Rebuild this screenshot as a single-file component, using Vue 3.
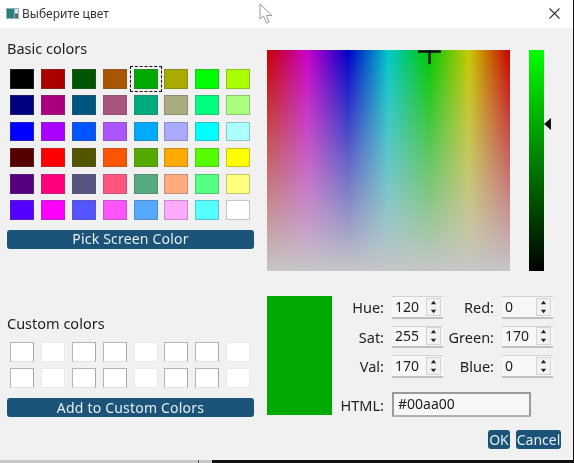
<script setup>
const rows = [
  ['#000000','#aa0000','#005500','#aa5500','#00aa00','#aaaa00','#00ff00','#aaff00'],
  ['#00007f','#aa007f','#00557f','#aa557f','#00aa7f','#aaaa7f','#00ff7f','#aaff7f'],
  ['#0000ff','#aa00ff','#0055ff','#aa55ff','#00aaff','#aaaaff','#00ffff','#aaffff'],
  ['#550000','#ff0000','#555500','#ff5500','#55aa00','#ffaa00','#55ff00','#ffff00'],
  ['#55007f','#ff007f','#55557f','#ff557f','#55aa7f','#ffaa7f','#55ff7f','#ffff7f'],
  ['#5500ff','#ff00ff','#5555ff','#ff55ff','#55aaff','#ffaaff','#55ffff','#ffffff'],
]
const basic = rows.flat()
const strong = [true, false, true, true, false, true, true, false]
const custom = [...strong, ...strong]
const spins = [
  { label: 'Hue:', value: '120' },
  { label: 'Red:', value: '0' },
  { label: 'Sat:', value: '255' },
  { label: 'Green:', value: '170' },
  { label: 'Val:', value: '170' },
  { label: 'Blue:', value: '0' },
]
</script>

<template>
  <div class="window">
    <header class="titlebar">
      <svg class="app-icon" width="13" height="13" viewBox="0 0 13 13">
        <rect x="0" y="1" width="13" height="11" fill="#8fb3b8" />
        <rect x="1" y="2" width="7" height="9" fill="#2c7f78" />
        <rect x="9" y="2" width="3" height="4" fill="#d8e4e6" />
        <rect x="9" y="7" width="3" height="4" fill="#4a6a78" />
      </svg>
      <span class="title">Выберите цвет</span>
      <svg class="close" width="11" height="11" viewBox="0 0 11 11">
        <path d="M0.5 0.5 L10.5 10.5 M10.5 0.5 L0.5 10.5" stroke="#333" stroke-width="1.1" fill="none" />
      </svg>
      <svg class="pointer" width="16" height="22" viewBox="0 0 16 22">
        <path d="M1 1 L1 16 L4.5 13 L7.5 20 L10 19 L7.5 12.5 L13 12.5 Z" fill="#fff" stroke="#9a9a9a" stroke-width="1" />
      </svg>
    </header>

    <main class="content">
      <section class="left">
        <h2 class="heading">Basic colors</h2>
        <div class="swatches">
          <div v-for="(c, i) in basic" :key="i" class="swatch-cell" :class="{ selected: c === '#00aa00' }">
            <div class="swatch" :style="{ background: c }"></div>
          </div>
        </div>
        <button class="btn wide pick">Pick Screen Color</button>
        <div class="spacer"></div>
        <h2 class="heading">Custom colors</h2>
        <div class="customs">
          <div v-for="(s, i) in custom" :key="i" class="custom" :class="{ strong: s }"></div>
        </div>
        <button class="btn wide add">Add to Custom Colors</button>
      </section>

      <section class="right">
        <div class="picker-row">
          <div class="spectrum">
            <svg class="cross" width="23" height="14" viewBox="0 0 23 14">
              <path d="M0 1.5 H23 M11.5 0 V14" stroke="#111" stroke-width="2.4" fill="none" />
            </svg>
          </div>
          <div class="value-wrap">
            <div class="value-bar"></div>
            <svg class="arrow" width="7" height="12" viewBox="0 0 7 12"><path d="M7 0 V12 L0 6 Z" fill="#111" /></svg>
          </div>
        </div>

        <div class="controls">
          <div class="preview"></div>
          <div class="fields">
            <div class="spin-grid">
              <div v-for="s in spins" :key="s.label" class="field">
                <label class="lbl">{{ s.label }}</label>
                <div class="spin">
                  <span class="val">{{ s.value }}</span>
                  <div class="steppers">
                    <svg width="9" height="9" viewBox="0 0 9 9"><path d="M4.5 2 L7.5 6 H1.5 Z" fill="#222" /></svg>
                    <svg width="9" height="9" viewBox="0 0 9 9"><path d="M4.5 7 L7.5 3 H1.5 Z" fill="#222" /></svg>
                  </div>
                </div>
              </div>
            </div>
            <div class="html-row">
              <label class="lbl html-lbl">HTML:</label>
              <div class="html-input">#00aa00</div>
            </div>
          </div>
        </div>

        <div class="actions">
          <button class="btn ok">OK</button>
          <button class="btn cancel">Cancel</button>
        </div>
      </section>
    </main>
  </div>
</template>

<style>
html, body { margin: 0; }
html { background: linear-gradient(to right, #c8c8c8 0 198px, #555 198px 199px, #c8c8c8 199px 212px, #111 212px); }
</style>

<style scoped>
.window {
  width: 573px;
  height: 460px;
  display: flex;
  flex-direction: column;
  background: #f1f1f2;
  font-family: "Noto Sans", "Open Sans", sans-serif;
  font-size: 14px;
  color: #222;
  filter: blur(0.35px);
  overflow: hidden;
}
.titlebar {
  position: relative;
  height: 27px;
  flex: none;
  display: flex;
  align-items: center;
  padding: 0 13px 1px 6px;
  gap: 3px;
  background: #fff;
}
.app-icon { flex: none; }
.title { font-size: 12px; color: #333; flex: 1; }
.close { flex: none; }
.pointer { position: absolute; left: 259px; top: 3px; }
.content {
  flex: 1;
  display: flex;
  padding: 11px 12px 0 7px;
  gap: 13px;
  min-height: 0;
}
.left {
  width: 247px;
  flex: none;
  display: flex;
  flex-direction: column;
  height: 378px;
}
.heading {
  margin: 0;
  font-weight: 400;
  font-size: 14.5px;
  line-height: 19px;
  color: #1e1e1e;
}
.swatches {
  display: grid;
  grid-template-columns: repeat(8, 24px);
  grid-auto-rows: 19.5px;
  column-gap: 6.9px;
  row-gap: 6.8px;
  padding: 11px 0 0 3px;
}
.swatch-cell { position: relative; }
.swatch {
  width: 100%;
  height: 100%;
  box-sizing: border-box;
  border: 1px solid rgba(90, 90, 90, 0.35);
}
.selected::after {
  content: "";
  position: absolute;
  inset: -3px -4px;
  border: 1px dashed #111;
}
.btn {
  border: 0;
  background: #1c5379;
  color: #e6eef4;
  font-family: inherit;
  font-size: 14px;
  line-height: 1;
  padding: 0;
  border-radius: 3px;
}
.wide { width: 247px; height: 19px; flex: none; letter-spacing: 0.2px; }
.pick { margin-top: 10px; }
.spacer { flex: 1; }
.customs {
  display: grid;
  grid-template-columns: repeat(8, 24px);
  grid-auto-rows: 20px;
  column-gap: 6.9px;
  row-gap: 6px;
  padding: 9px 0 0 3px;
}
.custom {
  background: #fff;
  box-sizing: border-box;
  border: 1px solid #ececec;
}
.custom.strong {
  border-color: #b5b5b5 #a8a8a8 #e2e2e2 #b5b5b5;
}
.add { margin-top: 10px; }

.right {
  flex: 1;
  min-width: 0;
  display: flex;
  flex-direction: column;
}
.picker-row {
  display: flex;
  gap: 19px;
  height: 221px;
  flex: none;
  margin-top: 11px;
}
.spectrum {
  position: relative;
  width: 243px;
  height: 100%;
  background:
    linear-gradient(to bottom, rgba(198, 198, 200, 0) 0%, rgba(198, 198, 200, 1) 100%),
    linear-gradient(to right, #c80000 0%, #c800c8 16.7%, #0000c8 33.3%, #00c8c8 50%, #00c800 66.7%, #c8c800 83.3%, #c80000 100%);
}
.cross { position: absolute; left: 151px; top: 0; }
.value-wrap { position: relative; width: 15px; height: 100%; }
.value-bar { width: 100%; height: 100%; background: linear-gradient(to bottom, #00ff00, #000); }
.arrow { position: absolute; left: 15px; top: 68px; }
.controls {
  display: flex;
  margin-top: 25px;
  height: 121px;
  flex: none;
}
.preview { width: 65px; height: 119px; background: #00aa00; flex: none; }
.fields { display: flex; flex-direction: column; margin-left: 8px; }
.spin-grid {
  display: grid;
  grid-template-columns: 103px 110px;
  grid-auto-rows: 22.5px;
  row-gap: 7px;
}
.field { display: flex; align-items: center; gap: 8px; justify-content: flex-end; }
.lbl { text-align: right; font-size: 14.5px; color: #222; }
.spin {
  width: 51px;
  height: 22.5px;
  box-sizing: border-box;
  flex: none;
  display: flex;
  align-items: center;
  justify-content: space-between;
  padding-left: 3px;
  padding-right: 2px;
  background: #f7f7f7;
  border-top: 1px solid #d2d2d2;
  border-bottom: 2px solid #c0c0c0;
}
.val { line-height: 1; }
.steppers {
  width: 15px;
  height: 18px;
  box-sizing: border-box;
  background: #f2f2f2;
  border: 1px solid #d4d4d4;
  display: flex;
  flex-direction: column;
  align-items: center;
  justify-content: center;
}
.steppers svg { display: block; height: 8px; }
.html-row {
  display: flex;
  align-items: center;
  gap: 8px;
  margin-top: 14.5px;
}
.html-lbl { width: 44px; flex: none; white-space: nowrap; }
.html-input {
  width: 139px;
  height: 25px;
  box-sizing: border-box;
  background: #f7f7f7;
  border: 2px solid #9a9a9a;
  border-bottom-color: #b0b0b0;
  padding-left: 4px;
  line-height: 20px;
}
.actions {
  display: flex;
  justify-content: flex-end;
  gap: 6px;
  margin-top: 13px;
}
.ok { width: 22px; height: 19px; }
.cancel { width: 45px; height: 19px; }
</style>
